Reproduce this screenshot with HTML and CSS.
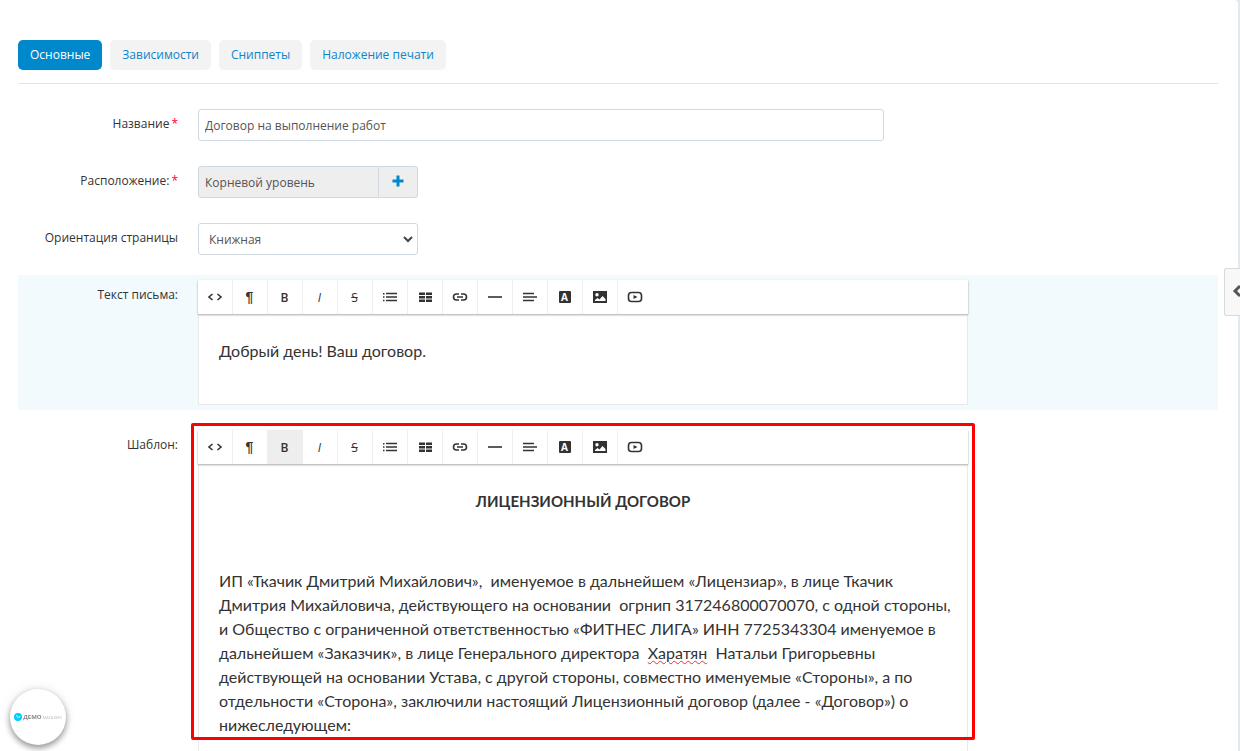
FILE: index.html
```html
<!DOCTYPE html>
<html lang="ru">
<head>
    <meta charset="UTF-8">
    <meta name="viewport" content="width=device-width, initial-scale=1.0">
    <title>Шаблон договора</title>
    <link rel="stylesheet" href="styles.css">
</head>
<body>

    <!-- Toolbar icons -->
    <svg class="sprite" aria-hidden="true">
        <symbol id="icon-code" viewBox="0 0 16 16"><path class="line" d="M5.500 5L2 8l3.500 3M10.500 5L14 8l-3.500 3"/></symbol>
        <symbol id="icon-list" viewBox="0 0 16 16"><path class="line" d="M4 4.500h11M4 8h11M4 11.500h11"/><path d="M1 4h1.500v1.500H1zM1 7.300h1.500v1.500H1zM1 10.800h1.500v1.500H1z"/></symbol>
        <symbol id="icon-table" viewBox="0 0 16 16"><path d="M2 3.500h6v2.500H2zM9 3.500h6v2.500H9zM2 7h6v2.500H2zM9 7h6v2.500H9zM2 10.500h6v2.500H2zM9 10.500h6v2.500H9z"/></symbol>
        <symbol id="icon-link" viewBox="0 0 16 16"><path class="line" d="M7 5H4.500a3 3 0 0 0 0 6H7M9 5h2.500a3 3 0 0 1 0 6H9M5 8h6"/></symbol>
        <symbol id="icon-line" viewBox="0 0 16 16"><path class="line" d="M1 8h14"/></symbol>
        <symbol id="icon-align" viewBox="0 0 16 16"><path class="line" d="M1 4.500h11M1 8h14M1 11.500h11"/></symbol>
        <symbol id="icon-image" viewBox="0 0 16 16"><path fill-rule="evenodd" d="M1 2h14v12H1zM3 12h10.500v-2L10.500 7 7.500 10.500 5.500 9 3 11zM5 4a1.700 1.700 0 1 0 0 3.400A1.700 1.700 0 0 0 5 4z"/></symbol>
        <symbol id="icon-video" viewBox="0 0 16 16"><rect class="line" x="1.500" y="3.500" width="13" height="9" rx="3"/><path d="M6.500 6l4 2-4 2z"/></symbol>
    </svg>

    <main class="page">
        <nav class="tabs">
            <a class="tab active" href="#main">Основные</a>
            <a class="tab" href="#depends">Зависимости</a>
            <a class="tab" href="#snippets">Сниппеты</a>
            <a class="tab" href="#stamp">Наложение печати</a>
        </nav>

        <form class="form">
            <div class="form-row">
                <label class="form-label" for="name">Название<span class="required">*</span></label>
                <input class="control control-wide" id="name" type="text" value="Договор на выполнение работ">
            </div>

            <div class="form-row">
                <label class="form-label" for="location">Расположение:<span class="required">*</span></label>
                <div class="input-group">
                    <input class="control" id="location" type="text" value="Корневой уровень" readonly>
                    <button class="add-btn" type="button" aria-label="Выбрать">
                        <svg width="12" height="12" viewBox="0 0 12 12"><path d="M4.500 0.500h3v4h4v3h-4v4h-3v-4h-4v-3h4z"/></svg>
                    </button>
                </div>
            </div>

            <div class="form-row">
                <label class="form-label" for="orientation">Ориентация страницы</label>
                <div class="select-box">
                    <select class="control" id="orientation">
                        <option>Книжная</option>
                        <option>Альбомная</option>
                    </select>
                    <svg class="arrow" width="10" height="8" viewBox="0 0 10 8"><path d="M1 2l4 4 4-4"/></svg>
                </div>
            </div>

            <div class="form-row highlighted">
                <span class="form-label" id="letter-label">Текст письма:</span>
                <div class="editor">
                    <div class="toolbar">
                        <button type="button" aria-label="HTML"><svg class="icon"><use href="#icon-code"/></svg></button>
                        <button class="pilcrow" type="button">¶</button>
                        <button class="bold" type="button">B</button>
                        <button class="italic" type="button">I</button>
                        <button class="strike" type="button">S</button>
                        <button type="button" aria-label="Список"><svg class="icon"><use href="#icon-list"/></svg></button>
                        <button type="button" aria-label="Таблица"><svg class="icon"><use href="#icon-table"/></svg></button>
                        <button type="button" aria-label="Ссылка"><svg class="icon"><use href="#icon-link"/></svg></button>
                        <button type="button" aria-label="Линия"><svg class="icon"><use href="#icon-line"/></svg></button>
                        <button type="button" aria-label="Выравнивание"><svg class="icon"><use href="#icon-align"/></svg></button>
                        <button type="button"><span class="color-icon">A</span></button>
                        <button type="button" aria-label="Картинка"><svg class="icon"><use href="#icon-image"/></svg></button>
                        <button type="button" aria-label="Видео"><svg class="icon"><use href="#icon-video"/></svg></button>
                    </div>
                    <div class="editor-body" contenteditable="true" spellcheck="false" role="textbox" aria-labelledby="letter-label">
                        <p>Добрый день! Ваш договор.</p>
                    </div>
                </div>
            </div>

            <div class="form-row">
                <span class="form-label" id="template-label">Шаблон:</span>
                <div class="editor">
                    <div class="toolbar">
                        <button type="button" aria-label="HTML"><svg class="icon"><use href="#icon-code"/></svg></button>
                        <button class="pilcrow" type="button">¶</button>
                        <button class="bold pressed" type="button">B</button>
                        <button class="italic" type="button">I</button>
                        <button class="strike" type="button">S</button>
                        <button type="button" aria-label="Список"><svg class="icon"><use href="#icon-list"/></svg></button>
                        <button type="button" aria-label="Таблица"><svg class="icon"><use href="#icon-table"/></svg></button>
                        <button type="button" aria-label="Ссылка"><svg class="icon"><use href="#icon-link"/></svg></button>
                        <button type="button" aria-label="Линия"><svg class="icon"><use href="#icon-line"/></svg></button>
                        <button type="button" aria-label="Выравнивание"><svg class="icon"><use href="#icon-align"/></svg></button>
                        <button type="button"><span class="color-icon">A</span></button>
                        <button type="button" aria-label="Картинка"><svg class="icon"><use href="#icon-image"/></svg></button>
                        <button type="button" aria-label="Видео"><svg class="icon"><use href="#icon-video"/></svg></button>
                    </div>
                    <div class="editor-body" contenteditable="true" spellcheck="false" role="textbox" aria-labelledby="template-label">
                        <p class="doc-title">ЛИЦЕНЗИОННЫЙ ДОГОВОР</p>
                        <p><br></p>
                        <p>ИП «Ткачик Дмитрий Михайлович»,&nbsp; именуемое в дальнейшем «Лицензиар», в лице Ткачик<br>
                        Дмитрия Михайловича, действующего на основании&nbsp; огрнип 317246800070070, с одной стороны,<br>
                        и Общество с ограниченной ответственностью «ФИТНЕС ЛИГА» ИНН 7725343304 именуемое в<br>
                        дальнейшем «Заказчик», в лице Генерального директора&nbsp; <span class="misspelled">Харатян</span>&nbsp; Натальи Григорьевны<br>
                        действующей на основании Устава, с другой стороны, совместно именуемые «Стороны», а по<br>
                        отдельности «Сторона», заключили настоящий Лицензионный договор (далее - «Договор») о<br>
                        нижеследующем:</p>
                    </div>
                    <div class="marker"></div>
                </div>
            </div>
        </form>
    </main>

    <button class="side-toggle" type="button" aria-label="Открыть панель">
        <svg width="10" height="14" viewBox="0 0 10 14"><path d="M8 2L3 7l5 5"/></svg>
    </button>

    <a class="demo-badge" href="#demo">
        <svg width="8" height="8" viewBox="0 0 8 8"><circle cx="4" cy="4" r="4" fill="#0cf"/><path d="M2 2.500l1 .3.500 1.500h2L6 3" fill="none" stroke="#fff" stroke-width=".7"/></svg>
        <b>ДЕМО</b><small>МАГАЗИН</small>
    </a>

</body>
</html>
```
FILE: styles.css
```css
* {
    box-sizing: border-box;
}
body {
    margin: 0;
    height: 100vh;
    overflow: hidden;
    background: #e4e9ee;
    color: #333;
    font-family: "Open Sans", "Noto Sans", sans-serif;
    font-size: 12px;
}
.sprite {
    display: none;
}
.page {
    min-height: 100vh;
    margin-right: 2px;
    padding: 40px 20px 0 18px;
    background: white;
    border-top-right-radius: 4px;
}

/* Tabs */
.tabs {
    display: flex;
    gap: 8px;
    padding-bottom: 13px;
    border-bottom: 1px solid #e2e6ea;
}
.tab {
    padding: 0 12px;
    line-height: 30px;
    border-radius: 5px;
    background: #f3f3f3;
    color: #0d84cb;
    text-decoration: none;
}
.tab.active {
    background: #0088cc;
    color: white;
}

/* Form */
.form {
    padding-top: 20px;
}
.form-row {
    display: grid;
    grid-template-columns: 160px 1fr;
    column-gap: 20px;
    padding: 5px 0;
    margin-bottom: 15px;
}
.highlighted {
    background: #f2fafe;
}
.form-label {
    line-height: 30px;
    text-align: right;
}
.required {
    margin-left: 2px;
    color: #f03;
}
.control {
    width: 100%;
    height: 32px;
    padding: 0 6px;
    border: 1px solid #d0d9e2;
    border-radius: 3px;
    background: white;
    color: #555;
    font: inherit;
}
.control-wide {
    max-width: 686px;
}
.input-group {
    display: flex;
    width: 220px;
}
.input-group .control {
    flex: 1;
    min-width: 0;
    border-radius: 3px 0 0 3px;
    background: #eee;
}
.add-btn {
    width: 39px;
    padding: 0;
    border: 1px solid #d0d9e2;
    border-left: 0;
    border-radius: 0 3px 3px 0;
    background: #eee;
    fill: #0088cc;
    cursor: pointer;
}
.select-box {
    position: relative;
    width: 220px;
}
.select-box .control {
    padding: 0 10px;
    appearance: none;
}
.arrow {
    position: absolute;
    right: 5px;
    top: 12px;
    fill: none;
    stroke: #444;
    stroke-width: 2;
    pointer-events: none;
}

/* Editor */
.editor {
    position: relative;
    max-width: 770px;
}
.toolbar {
    position: relative;
    display: flex;
    height: 34px;
    background: white;
    box-shadow: 0 1px 2px rgba(0, 0, 0, 0.35);
}
.toolbar button {
    display: flex;
    align-items: center;
    justify-content: center;
    width: 35px;
    padding: 0 1px 0 0;
    border: 0;
    border-right: 1px solid #eee;
    background: white;
    color: #333;
    font-family: inherit;
    font-size: 12px;
    cursor: pointer;
}
.toolbar button:last-child {
    border-right-color: white;
}
.toolbar .bold {
    font-weight: 600;
}
.toolbar .italic {
    font-style: italic;
}
.toolbar .strike {
    text-decoration: line-through;
}
.toolbar .pilcrow {
    font-family: "Liberation Sans", sans-serif;
    font-size: 14px;
    font-weight: bold;
}
.toolbar .pressed {
    background: #eee;
}
.icon {
    width: 16px;
    height: 16px;
    fill: #333;
}
.line {
    fill: none;
    stroke: #333;
    stroke-width: 1.6;
}
.color-icon {
    width: 12px;
    border-radius: 1px;
    background: #333;
    color: white;
    font-size: 10px;
    font-weight: bold;
    line-height: 12px;
}
.editor-body {
    min-height: 91px;
    padding: 25px 20px 24px;
    border: 1px solid #eaeaea;
    border-top: 0;
    background: white;
    font-family: Lato, "Open Sans", sans-serif;
    font-size: 16px;
    line-height: 24px;
    white-space: nowrap;
}
.editor-body p {
    margin: 0 0 16px;
}
.editor-body p:last-child {
    margin-bottom: 0;
}
.editor-body .doc-title {
    font-size: 15px;
    font-weight: bold;
    text-align: center;
}
.misspelled {
    text-decoration: underline wavy #e33 1px;
}
.marker {
    position: absolute;
    top: -7px;
    left: -7px;
    right: -7px;
    height: 317px;
    border: 3px solid #f00;
    border-radius: 2px;
    pointer-events: none;
}

/* Floating items */
.side-toggle {
    position: fixed;
    top: 268px;
    right: 0;
    width: 16px;
    height: 48px;
    padding: 0 0 0 7px;
    border: 1px solid #d8dadc;
    border-right: 0;
    border-radius: 3px 0 0 3px;
    background: #f8f8f8;
    overflow: hidden;
}
.side-toggle path {
    fill: none;
    stroke: #555;
    stroke-width: 3;
}
.demo-badge {
    position: fixed;
    left: 10px;
    bottom: 6px;
    display: flex;
    align-items: center;
    justify-content: center;
    gap: 1px;
    width: 56px;
    height: 56px;
    border-radius: 50%;
    background: white;
    box-shadow: 0 3px 6px rgba(0, 0, 0, 0.4), 0 0 12px rgba(0, 0, 0, 0.1);
    color: #888;
    font-size: 6px;
    text-decoration: none;
}
.demo-badge small {
    color: #bbb;
    font-size: 4px;
}
```
